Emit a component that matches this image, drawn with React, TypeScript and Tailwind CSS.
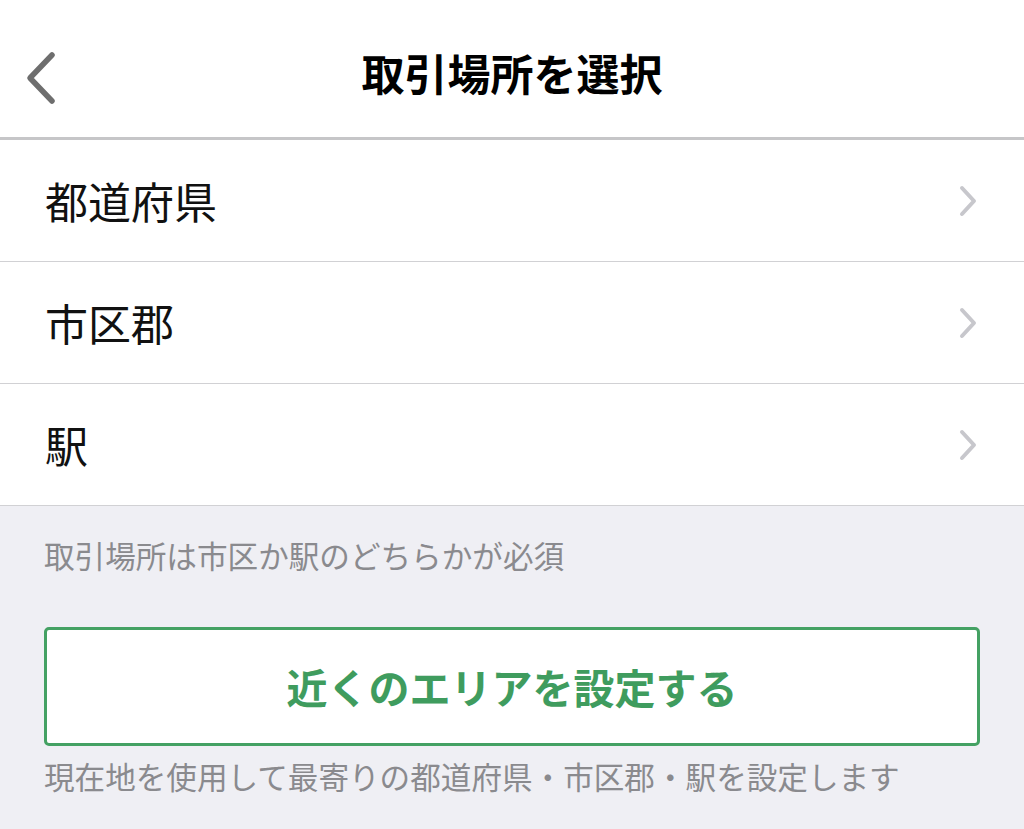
import { ReactNode } from "react"

const FONT = { fontFamily: '"Noto Sans CJK JP", "Noto Sans", sans-serif' }

function Row({ label }: { label: ReactNode }) {
  return (
    <div className="flex h-[122px] items-center justify-between border-b border-[#d1d1d4] pl-[45px] pr-[46px]">
      <span className="text-[43px] leading-none text-[#111]">{label}</span>
      <svg width="20" height="32" viewBox="0 0 20 32" fill="none">
        <path d="M4 3 L16 16 L4 29" stroke="#c7c7cc" strokeWidth="4" strokeLinecap="round" strokeLinejoin="round" />
      </svg>
    </div>
  )
}

export default function App() {
  return (
    <div className="flex min-h-[829px] w-full flex-col bg-[#efeff4]" style={FONT}>
      {/* ヘッダー */}
      <div className="relative flex h-[140px] items-center justify-center border-b-[3px] border-[#c6c6c8] bg-white pt-[8px]">
        <button className="absolute left-[23px] top-[50px]">
          <svg width="36" height="56" viewBox="0 0 36 56" fill="none">
            <path d="M29 5 L7 28 L29 51" stroke="#6e6e6e" strokeWidth="5.5" strokeLinecap="round" strokeLinejoin="round" />
          </svg>
        </button>
        <h1 className="text-[43px] font-bold leading-none text-black">取引場所を選択</h1>
      </div>

      {/* 選択肢 */}
      <div className="bg-white">
        <Row label="都道府県" />
        <Row label="市区郡" />
        <Row label="駅" />
      </div>

      <div className="px-[44px]">
        <p className="mt-[34px] text-[30.6px] leading-none text-[#8a8a8e]">取引場所は市区か駅のどちらかが必須</p>
        <button className="mt-[56px] flex h-[119px] w-full items-center justify-center rounded-[5px] border-[3px] border-[#44a163] bg-white">
          <span className="text-[41px] font-bold leading-none text-[#3f9c5e]">近くのエリアを設定する</span>
        </button>
        <p className="mt-[15px] text-[30.6px] leading-none text-[#8a8a8e]">現在地を使用して最寄りの都道府県・市区郡・駅を設定します</p>
      </div>
    </div>
  )
}
